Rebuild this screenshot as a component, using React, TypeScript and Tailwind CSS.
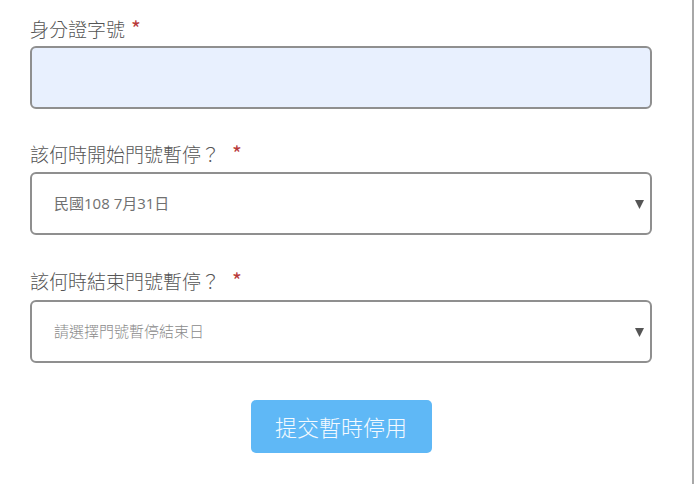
import React from 'react';

const font = { fontFamily: '"Noto Sans CJK TC", "Noto Sans", sans-serif' };

const Label = ({ text, gap, className }: { text: string; gap: string; className?: string }) => (
  <div className={`h-[26px] leading-[26px] text-[19px] font-light text-[#555] ${className ?? ''}`}>
    {text}
    <span className={`${gap} text-[#b8393a] text-[21px] font-normal`}>*</span>
  </div>
);

const Arrow = () => (
  <svg width="9" height="9" viewBox="0 0 9 9" className="absolute right-[6px] top-1/2 -translate-y-[4px]">
    <polygon points="0,0 9,0 4.5,9" fill="#555" />
  </svg>
);

const SelectBox = ({ value, placeholder }: { value?: string; placeholder?: string }) => (
  <div className="relative h-[63px] rounded-[6px] border-2 border-[#8f8f8f] bg-white flex items-center pl-[22px]">
    <span
      className={`text-[15px] ${value ? 'text-[#707070]' : 'text-[#8a8a8a] font-light'}`}
      style={{ fontFamily: '"Open Sans", "Noto Sans CJK TC", sans-serif' }}
    >
      {value ?? placeholder}
    </span>
    <Arrow />
  </div>
);

export default function App() {
  return (
    <div className="w-[699px] h-[484px] bg-white flex overflow-hidden" style={font}>
      <div className="w-[694px] h-full border-r-2 border-[#a8a8a8] pl-[30px] pr-[40px]">
        {/* 身分證字號 */}
        <Label text="身分證字號" gap="ml-[6px]" className="mt-[15px] mb-[5px]" />
        <div className="h-[63px] rounded-[6px] border-2 border-[#8f8f8f] bg-[#e8f0fe]" />

        {/* 開始日 */}
        <Label text="該何時開始門號暫停？" gap="ml-[12px]" className="mt-[31px] mb-[6px]" />
        <SelectBox value="民國108 7月31日" />

        {/* 結束日 */}
        <Label text="該何時結束門號暫停？" gap="ml-[12px]" className="mt-[32px] mb-[7px]" />
        <SelectBox placeholder="請選擇門號暫停結束日" />

        <div className="flex justify-center mt-[37px]">
          <button className="w-[181px] h-[53px] rounded-[5px] bg-[#5fb8f6] text-[22px] font-light text-[#f4faff]">
            提交暫時停用
          </button>
        </div>
      </div>
    </div>
  );
}
